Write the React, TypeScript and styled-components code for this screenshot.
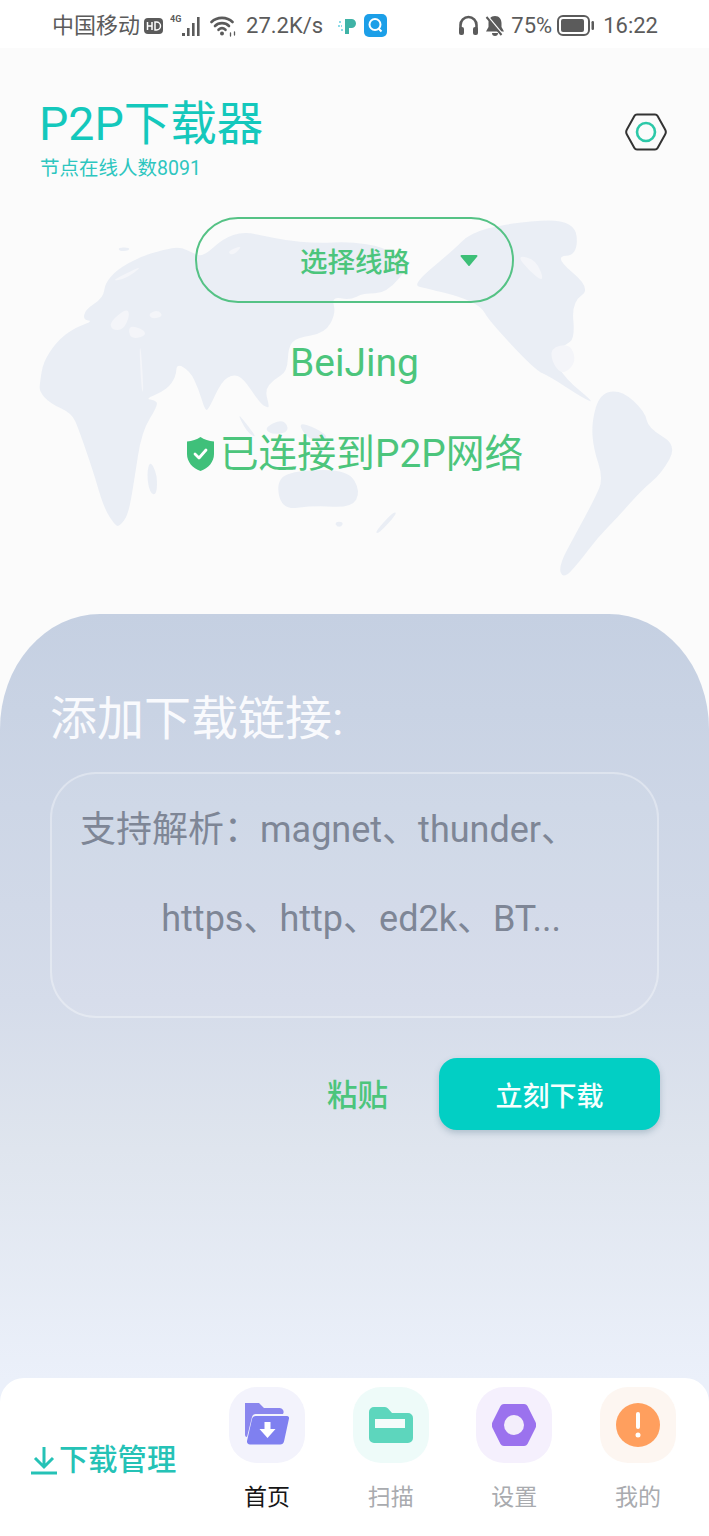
import React from "react";
import styled, { createGlobalStyle } from "styled-components";

const Global = createGlobalStyle`
  html, body { margin: 0; padding: 0; background: #fbfbfb; }
  * { box-sizing: border-box; }
  body { font-family: Roboto, "Noto Sans CJK SC", sans-serif; }
`;

const Page = styled.div`
  width: 709px;
  height: 1536px;
  display: flex;
  flex-direction: column;
  overflow: hidden;
  background: #fbfbfb;
`;

/* status bar */
const StatusBar = styled.div`
  height: 48px;
  flex: none;
  background: #ffffff;
  display: flex;
  align-items: center;
  justify-content: space-between;
  padding: 3px 51px 0 52px;
  color: #5b5b5b;
`;
const StatusGroup = styled.div`
  display: flex;
  align-items: center;
`;
const StatusText = styled.span<{ $ml?: number }>`
  font-size: 22px;
  line-height: 26px;
  margin-left: ${(p) => p.$ml ?? 0}px;
  white-space: nowrap;
`;
const StatusIcon = styled.svg<{ $ml?: number }>`
  display: block;
  flex: none;
  margin-left: ${(p) => p.$ml ?? 0}px;
`;

/* hero */
const Hero = styled.div`
  position: relative;
  height: 566px;
  flex: none;
  display: flex;
  flex-direction: column;
  align-items: center;
`;
const WorldMap = styled.svg`
  position: absolute;
  left: 0;
  top: 152px;
  width: 709px;
  height: 400px;
  filter: blur(0.7px);
`;
const Header = styled.div`
  position: relative;
  width: 100%;
  height: 169px;
  flex: none;
  display: flex;
  justify-content: space-between;
  align-items: flex-start;
  padding: 45px 42px 0 39px;
`;
const TitleBlock = styled.div`
  display: flex;
  flex-direction: column;
`;
const Title = styled.div`
  font-size: 46.5px;
  line-height: 62px;
  color: #14c8bc;
  white-space: nowrap;
`;
const Subtitle = styled.div`
  font-size: 19.5px;
  line-height: 26px;
  margin: 1px 0 0 1px;
  color: #2dc6bf;
  white-space: nowrap;
`;
const GearButton = styled.svg`
  display: block;
  margin-top: 20px;
`;
const RoutePill = styled.div`
  position: relative;
  width: 319px;
  height: 86px;
  flex: none;
  border: 2px solid #55c285;
  border-radius: 43px;
  display: flex;
  align-items: center;
  padding-left: 103px;
  gap: 50px;
  font-size: 27.5px;
  font-weight: 500;
  color: #4cc57c;
`;
const Caret = styled.svg`
  display: block;
  flex: none;
`;
const City = styled.div`
  position: relative;
  margin-top: 30px;
  font-size: 39px;
  line-height: 60px;
  color: #4cc57c;
`;
const Connected = styled.div`
  position: relative;
  margin-top: 33px;
  display: flex;
  align-items: center;
  gap: 5px;
  font-size: 38.8px;
  line-height: 56px;
  color: #4cc57c;
  white-space: nowrap;
`;

/* card */
const Card = styled.div`
  flex: 1;
  display: flex;
  flex-direction: column;
  border-radius: 100px 100px 0 0 / 115px 115px 0 0;
  background: linear-gradient(180deg, #c5d0e2 0%, #d5dcea 42%, #dfe5ee 58%, #ebf0fa 83%);
  padding-top: 72px;
`;
const CardTitle = styled.div`
  font-size: 47px;
  line-height: 66px;
  margin-left: 50px;
  color: #f9fafd;
`;
const LinkBox = styled.div`
  width: 609px;
  height: 246px;
  margin: 20px 0 0 50px;
  flex: none;
  border: 2px solid rgba(255, 255, 255, 0.32);
  border-radius: 46px;
  background: rgba(255, 255, 255, 0.05);
  padding: 12px 0 0 28px;
  font-size: 36px;
  line-height: 89px;
  color: #7e8696;
`;
const Hint = styled.div`
  width: 481px;
  text-align: right;
  white-space: nowrap;
`;
const HintFirst = styled.div`
  white-space: nowrap;
`;
const Actions = styled.div`
  display: flex;
  align-items: center;
  justify-content: flex-end;
  gap: 51px;
  margin-top: 40px;
  padding-right: 49px;
`;
const PasteLabel = styled.div`
  font-size: 30.5px;
  font-weight: 500;
  line-height: 40px;
  color: #4cc57c;
  margin-top: 4px;
`;
const DownloadButton = styled.div`
  width: 221px;
  height: 72px;
  border-radius: 18px;
  background: #02cfc4;
  box-shadow: 0 3px 6px rgba(70, 110, 130, 0.3);
  display: flex;
  align-items: center;
  justify-content: center;
  font-size: 27px;
  font-weight: 500;
  color: #f6fffe;
`;

/* bottom nav */
const Nav = styled.div`
  margin-top: auto;
  height: 158px;
  flex: none;
  background: #ffffff;
  border-radius: 24px 24px 0 0;
  display: flex;
  align-items: flex-start;
  padding: 9px 33px 0 31px;
`;
const ManageLink = styled.div`
  display: flex;
  align-items: center;
  gap: 2px;
  margin-top: 53px;
  width: 198px;
  font-size: 29.3px;
  font-weight: 500;
  line-height: 40px;
  color: #25c2b6;
  white-space: nowrap;
`;
const Tabs = styled.div`
  flex: 1;
  display: flex;
  justify-content: space-between;
`;
const Tab = styled.div`
  width: 76px;
  display: flex;
  flex-direction: column;
  align-items: center;
`;
const Tile = styled.div<{ $bg: string }>`
  width: 76px;
  height: 76px;
  border-radius: 28px;
  background: ${(p) => p.$bg};
  display: flex;
  align-items: center;
  justify-content: center;
`;
const TabLabel = styled.div<{ $active?: boolean }>`
  margin-top: 18px;
  font-size: 23px;
  line-height: 34px;
  color: ${(p) => (p.$active ? "#161616" : "#a9abaf")};
`;

type Pt = [number, number];

/* turns a coastline point list into a smooth closed path */
const coast = (pts: Pt[]): string => {
  const mid = (a: Pt, b: Pt): Pt => [(a[0] + b[0]) / 2, (a[1] + b[1]) / 2];
  const start = mid(pts[pts.length - 1], pts[0]);
  let d = `M${start[0]} ${start[1]}`;
  pts.forEach((p, i) => {
    const m = mid(p, pts[(i + 1) % pts.length]);
    d += `Q${p[0]} ${p[1]} ${m[0]} ${m[1]}`;
  });
  return d + "Z";
};

const LEFT: Pt[][] = [
  [
    [30, 500], [40, 440], [80, 380], [130, 340], [190, 318], [160, 315], [165, 285], [220, 248], [225, 205], [260, 165],
    [330, 125], [400, 105], [450, 95], [490, 115], [520, 125], [580, 70], [640, 50], [715, 65], [760, 75], [860, 85],
    [960, 80], [1060, 95], [1145, 145], [1070, 235], [1000, 235], [960, 255], [905, 245], [918, 295], [885, 355],
    [800, 368], [775, 395], [772, 470], [730, 495], [705, 525], [718, 575], [712, 578], [690, 565], [640, 490], [610, 478],
    [575, 498], [535, 585], [525, 585], [505, 520], [480, 468], [440, 445], [438, 485], [410, 525], [345, 552], [375, 555],
    [385, 570], [335, 650], [312, 800], [295, 900], [268, 935], [255, 930], [222, 880], [190, 770], [145, 640], [125, 595], [60, 565], [28, 530],
  ],
  [[738, 790], [810, 765], [955, 765], [992, 830], [965, 878], [850, 872], [755, 885]],
  [[360, 735], [382, 780], [380, 840], [360, 835], [350, 780]],
  [[265, 97], [300, 98], [295, 108], [268, 108]],
  [[700, 640], [760, 610], [780, 650], [730, 660]],
  [[800, 620], [860, 640], [900, 670], [840, 680]],
  [[620, 590], [660, 640], [680, 670], [650, 650]],
  [[915, 920], [940, 920], [935, 935], [920, 935]],
];

const LEFT_HOLES: Pt[][] = [
  [[240, 320], [290, 280], [300, 300], [280, 345], [245, 345]],
  [[295, 330], [345, 345], [345, 365], [300, 372]],
  [[355, 295], [385, 285], [400, 305], [365, 312]],
  [[240, 200], [310, 165], [335, 155], [290, 190]],
  [[328, 400], [333, 400], [341, 530], [335, 530]],
  [[590, 110], [640, 90], [610, 122]],
];

const RIGHT: Pt[][] = [
  [
    [185, 210], [310, 105], [360, 55], [470, 25], [675, 10], [685, 120], [610, 125], [725, 220], [665, 262], [675, 370],
    [645, 390], [605, 420], [645, 490], [735, 565], [700, 550], [600, 485], [555, 465], [415, 315], [395, 275],
    [330, 245], [230, 220],
  ],
  [
    [750, 535], [815, 525], [885, 590], [895, 640], [982, 690], [935, 775], [875, 825], [805, 905], [745, 965],
    [685, 1045], [640, 1092], [625, 1055], [675, 960], [735, 850], [760, 790], [730, 700], [725, 620],
  ],
  [[130, 890], [142, 895], [85, 958], [75, 950]],
];

const RIGHT_HOLES: Pt[][] = [
  [[500, 120], [560, 135], [585, 205], [535, 165]],
  [[600, 400], [660, 385], [680, 440], [640, 480], [610, 450]],
];

const Wifi = () => (
  <StatusIcon $ml={7} width="27" height="22" viewBox="0 0 27 22" fill="none" stroke="#5b5b5b" strokeWidth="2.600" strokeLinecap="round">
    <path d="M1.500 7C7 1.500 17 1.500 22.500 7" />
    <path d="M5 11c3.800-3.800 10.200-3.800 14 0" />
    <path d="M8.500 14.800c2.200-2 4.800-2 7 0" />
    <circle cx="12" cy="18.500" r="2" fill="#5b5b5b" stroke="none" />
    <path d="M20.500 18v3M24.500 17v3" strokeWidth="1.300" />
  </StatusIcon>
);

const FULL_COLON = "\uFF1A";

export default function App() {
  return (
    <Page>
      <Global />
      <StatusBar>
        <StatusGroup>
          <StatusText>中国移动</StatusText>
          <StatusIcon $ml={4} width="19" height="16" viewBox="0 0 19 16">
            <rect width="19" height="16" rx="4" fill="#5b5b5b" />
            <path d="M3.500 4v8M8 4v8M3.500 8H8M11 4v8h1.500a4 4 0 0 0 0-8z" fill="none" stroke="#fff" strokeWidth="1.500" />
          </StatusIcon>
          <StatusIcon $ml={7} width="33" height="24" viewBox="0 0 33 24">
            <text x="0" y="8" fontSize="9" fontWeight="700" fontFamily="Roboto, sans-serif" fill="#5b5b5b">4G</text>
            <rect x="12" y="19" width="3" height="3" fill="#5b5b5b" />
            <rect x="17" y="14" width="2.600" height="8" fill="#5b5b5b" />
            <rect x="22" y="9" width="2.600" height="13" fill="#5b5b5b" />
            <rect x="27" y="3" width="2.600" height="19" fill="#5b5b5b" />
          </StatusIcon>
          <Wifi />
          <StatusText $ml={9}>27.2K/s</StatusText>
          <StatusIcon $ml={15} width="18" height="18" viewBox="0 0 18 18">
            <path d="M7 2h6.500a4.500 4.500 0 0 1 0 9H11v6H7z" fill="#3fb3a6" />
            <path d="M1 5h3M0 9h4M3 13h2" stroke="#8edbe8" strokeWidth="2" strokeDasharray="2 1" />
          </StatusIcon>
          <StatusIcon $ml={8} width="23" height="23" viewBox="0 0 23 23">
            <rect width="23" height="23" rx="5" fill="#1c9fe8" />
            <circle cx="11" cy="10.500" r="5.500" fill="none" stroke="#fff" strokeWidth="2" />
            <path d="M14.500 14.500l3 3" stroke="#fff" strokeWidth="2" />
          </StatusIcon>
        </StatusGroup>
        <StatusGroup>
          <StatusIcon width="21" height="21" viewBox="0 0 21 21" fill="none">
            <path d="M2.500 14V10a8 8 0 0 1 16 0v4" stroke="#5b5b5b" strokeWidth="2.600" />
            <rect x="1" y="12" width="5" height="8" rx="2" fill="#5b5b5b" />
            <rect x="15" y="12" width="5" height="8" rx="2" fill="#5b5b5b" />
          </StatusIcon>
          <StatusIcon $ml={6} width="20" height="22" viewBox="0 0 20 22" fill="none">
            <path d="M10 1c-4.500 0-6.500 3.500-6.500 7v4L1 16.500h18L16.500 12V8C16.500 4.500 14.500 1 10 1z" fill="#5b5b5b" />
            <path d="M7 18h6a3 3 0 0 1-6 0z" fill="#5b5b5b" />
            <path d="M3 2l15 18" stroke="#fff" strokeWidth="2" />
            <path d="M1.500 2l15 18" stroke="#5b5b5b" strokeWidth="2" />
          </StatusIcon>
          <StatusText $ml={6}>75%</StatusText>
          <StatusIcon $ml={5} width="37" height="21" viewBox="0 0 37 21">
            <rect x="1" y="1" width="31" height="19" rx="5" fill="none" stroke="#5b5b5b" strokeWidth="2" />
            <rect x="4" y="4" width="23" height="13" rx="2" fill="#5b5b5b" />
            <rect x="34.500" y="6" width="2.500" height="9" rx="1.200" fill="#5b5b5b" />
          </StatusIcon>
          <StatusText $ml={9}>16:22</StatusText>
        </StatusGroup>
      </StatusBar>

      <Hero>
        <WorldMap viewBox="0 200 709 400">
          <g transform="translate(30 215) scale(0.3333)">
            {LEFT.map((s, i) => <path key={i} d={coast(s)} fill="#eaeef5" />)}
            {LEFT_HOLES.map((s, i) => <path key={i} d={coast(s)} fill="#f4f5f9" />)}
          </g>
          <g transform="translate(350 215) scale(0.3333)">
            {RIGHT.map((s, i) => <path key={i} d={coast(s)} fill="#eaeef5" />)}
            {RIGHT_HOLES.map((s, i) => <path key={i} d={coast(s)} fill="#f4f5f9" />)}
          </g>
        </WorldMap>

        <Header>
          <TitleBlock>
            <Title>P2P下载器</Title>
            <Subtitle>节点在线人数8091</Subtitle>
          </TitleBlock>
          <GearButton width="42" height="38" viewBox="0 0 42 38" fill="none">
            <path d="M12 1.500h18a3 3 0 0 1 2.600 1.500l7.500 13.500a5 5 0 0 1 0 5L32.600 35a3 3 0 0 1-2.600 1.500H12A3 3 0 0 1 9.400 35L1.900 21.500a5 5 0 0 1 0-5L9.400 3A3 3 0 0 1 12 1.500z" stroke="#333" strokeWidth="2" />
            <circle cx="21" cy="19" r="9" stroke="#2cc8a8" strokeWidth="2.600" />
          </GearButton>
        </Header>

        <RoutePill>
          <span>选择线路</span>
          <Caret width="18" height="13" viewBox="0 0 18 13">
            <path d="M1.500 1h15a1 1 0 0 1 .8 1.600L9.800 11.500a1 1 0 0 1-1.600 0L.7 2.600A1 1 0 0 1 1.500 1z" fill="#3dbf77" />
          </Caret>
        </RoutePill>
        <City>BeiJing</City>
        <Connected>
          <svg width="29" height="36" viewBox="0 0 29 36">
            <path d="M14.500 1C18 3.500 23 5 28 5.500V18c0 8-5.500 14-13.500 17C6.500 32 1 26 1 18V5.500C6 5 11 3.500 14.500 1z" fill="#3fc07a" />
            <path d="M9 18l4 4 7-8" fill="none" stroke="#fff" strokeWidth="2.800" strokeLinecap="round" strokeLinejoin="round" />
          </svg>
          <span>已连接到P2P网络</span>
        </Connected>
      </Hero>

      <Card>
        <CardTitle>添加下载链接:</CardTitle>
        <LinkBox>
          <HintFirst>{`支持解析${FULL_COLON}magnet、thunder、`}</HintFirst>
          <Hint>https、http、ed2k、BT...</Hint>
        </LinkBox>
        <Actions>
          <PasteLabel>粘贴</PasteLabel>
          <DownloadButton>立刻下载</DownloadButton>
        </Actions>
        <Nav>
          <ManageLink>
            <svg width="26" height="30" viewBox="0 0 26 30" fill="none" stroke="#25c2b6" strokeWidth="3">
              <path d="M13 2v19M4 13l9 9 9-9" />
              <path d="M0 28h26" />
            </svg>
            <span>下载管理</span>
          </ManageLink>
          <Tabs>
            <Tab>
              <Tile $bg="#f3f3fc">
                <svg width="46" height="46" viewBox="0 0 46 46">
                  <path d="M1 1h14l5 5h15a4 4 0 0 1 4 6H12a4 4 0 0 0-4 3L3 35a2 2 0 0 1-2-2z" fill="#8a86ee" />
                  <path d="M12 14h31a2 2 0 0 1 2 2.500l-5 23a4 4 0 0 1-4 3H6a3 3 0 0 1-3-3.500l5-22a4 4 0 0 1 4-3z" fill="#7f80f0" />
                  <path d="M20.500 20h6v7h5L23.500 36l-8-9h5z" fill="#fff" />
                </svg>
              </Tile>
              <TabLabel $active>首页</TabLabel>
            </Tab>
            <Tab>
              <Tile $bg="#eefbf9">
                <svg width="44" height="36" viewBox="0 0 44 36">
                  <path d="M5 0h11a4 4 0 0 1 3 1.500L23 6h16a5 5 0 0 1 5 5v20a5 5 0 0 1-5 5H5a5 5 0 0 1-5-5V5a5 5 0 0 1 5-5z" fill="#5dd6bd" />
                  <rect x="6" y="12" width="30" height="9" fill="#f5fcfb" />
                </svg>
              </Tile>
              <TabLabel>扫描</TabLabel>
            </Tab>
            <Tab>
              <Tile $bg="#f5f0fd">
                <svg width="44" height="42" viewBox="0 0 44 42">
                  <path d="M12 0h20a4 4 0 0 1 3.500 2l7.500 15a8 8 0 0 1 0 8l-7.500 15a4 4 0 0 1-3.500 2H12a4 4 0 0 1-3.500-2L1 25a8 8 0 0 1 0-8L8.500 2A4 4 0 0 1 12 0z" fill="#9b72ee" />
                  <circle cx="22" cy="21" r="10" fill="#f3eefb" />
                </svg>
              </Tile>
              <TabLabel>设置</TabLabel>
            </Tab>
            <Tab>
              <Tile $bg="#fdf6f1">
                <svg width="44" height="44" viewBox="0 0 44 44">
                  <circle cx="22" cy="22" r="22" fill="#ff9f5e" />
                  <rect x="20" y="9" width="4" height="17" rx="2" fill="#fff" />
                  <circle cx="22" cy="32" r="2.500" fill="#fff" />
                </svg>
              </Tile>
              <TabLabel>我的</TabLabel>
            </Tab>
          </Tabs>
        </Nav>
      </Card>
    </Page>
  );
}
